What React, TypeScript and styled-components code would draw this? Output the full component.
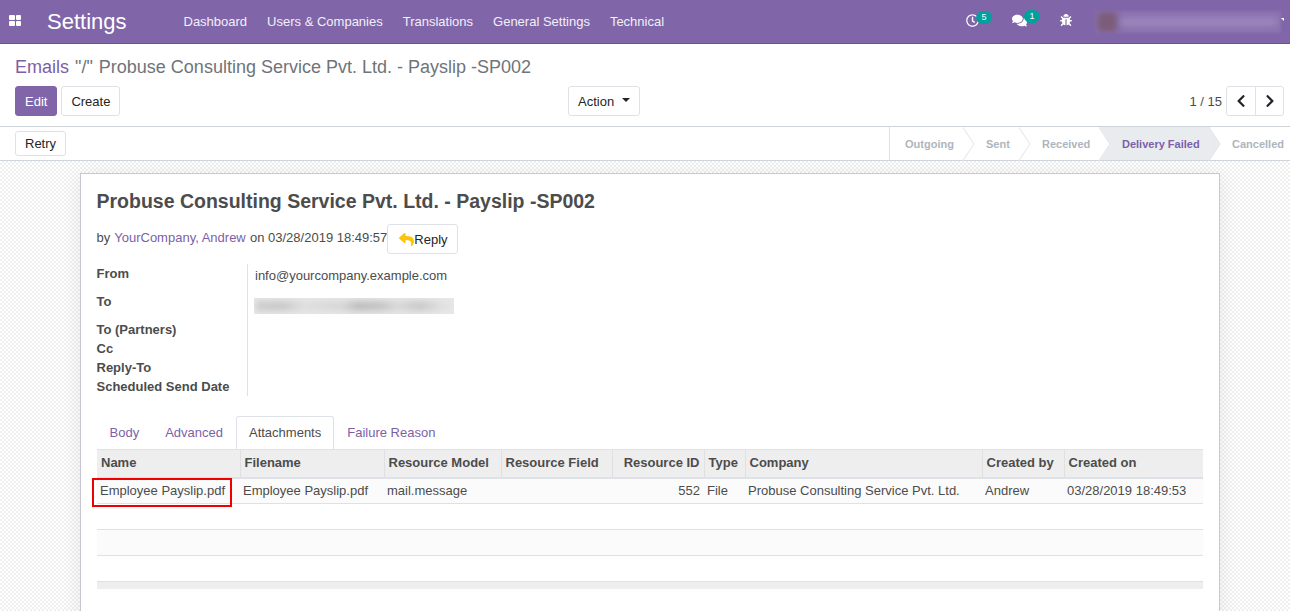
import styled, { createGlobalStyle } from 'styled-components'
import { FaBug, FaChevronLeft, FaChevronRight, FaComments, FaRegClock, FaReply } from 'react-icons/fa'

const GlobalStyle = createGlobalStyle`
  html, body {
    margin: 0;
    padding: 0;
    height: 100%;
    overflow: hidden;
  }
  body {
    font-family: "Liberation Sans", Arial, sans-serif;
    font-size: 13px;
    line-height: 19px;
    color: #4c4c4c;
    background: #fff;
  }
  * {
    box-sizing: border-box;
  }
`

const purple = '#8066a9'
const linkPurple = '#7c5fa8'
const line = '#dee2e6'

const Page = styled.div`
  height: 611px;
  display: flex;
  flex-direction: column;
  overflow: hidden;
`

const NavBar = styled.header`
  flex: none;
  height: 44px;
  display: flex;
  align-items: center;
  background: ${purple};
  border-bottom: 1px solid #6b5590;
  color: #fff;
`

const AppsButton = styled.div`
  width: 47px;
  padding-left: 9px;
  display: flex;
`

const AppsGrid = styled.div`
  width: 12px;
  margin-bottom: 3px;
  display: grid;
  grid-template-columns: 6px 5px;
  grid-auto-rows: 5px;
  gap: 1px;
  span {
    background: #fff;
    border-radius: 1px;
  }
`

const Brand = styled.div`
  font-size: 22px;
  line-height: 30px;
  margin-right: 57px;
`

const MainMenu = styled.nav`
  display: flex;
  gap: 20px;
  span {
    color: #f2eff7;
  }
`

const Systray = styled.div`
  margin-left: auto;
  display: flex;
  align-items: center;
  height: 100%;
`

const TrayItem = styled.div<{ $w: number }>`
  position: relative;
  width: ${(p) => p.$w}px;
  margin-bottom: 3px;
  display: flex;
  align-items: center;
  font-size: 13px;
`

const Badge = styled.span<{ $left: number }>`
  position: absolute;
  left: ${(p) => p.$left}px;
  top: -3px;
  width: 16px;
  height: 13px;
  border-radius: 6.5px;
  background: #00a09d;
  color: #fff;
  font-size: 9px;
  line-height: 13px;
  text-align: center;
`

const UserBlur = styled.div`
  position: relative;
  width: 186px;
  height: 22px;
  margin-left: 7px;
  margin-right: 9px;
  overflow: hidden;
  background: #8a72b0;
  filter: blur(1px);
  i {
    position: absolute;
    left: 2px;
    top: 1px;
    width: 20px;
    height: 20px;
    background: #7d5c78;
    filter: blur(3px);
  }
  b {
    position: absolute;
    left: 26px;
    right: 4px;
    top: 7px;
    height: 8px;
    background: #9c89bd;
    filter: blur(3px);
  }
`

const Caret = styled.span`
  position: absolute;
  right: 6px;
  top: 18px;
  border-top: 3px solid #fff;
  border-left: 3px solid transparent;
`

const ControlPanel = styled.section`
  flex: none;
  height: 83px;
  padding: 12px 6px 0 15px;
  border-bottom: 1px solid #ced4da;
`

const Breadcrumb = styled.div`
  font-size: 18px;
  line-height: 23px;
  color: #6f7479;
  a {
    color: ${linkPurple};
    margin-right: 1px;
  }
  span {
    margin-right: 1px;
  }
`

const ControlRow = styled.div`
  margin-top: 7px;
  display: grid;
  grid-template-columns: 553px auto 1fr;
  align-items: center;
`

const ButtonRow = styled.div`
  display: flex;
  gap: 4px;
`

const Button = styled.button<{ $primary?: boolean; $h?: number }>`
  height: ${(p) => p.$h ?? 30}px;
  padding: 0 9px;
  font: inherit;
  color: ${(p) => (p.$primary ? '#fff' : '#212529')};
  background: ${(p) => (p.$primary ? purple : '#fff')};
  border: 1px solid ${(p) => (p.$primary ? purple : line)};
  border-radius: 3px;
  display: inline-flex;
  align-items: center;
`

const ActionCaret = styled.span`
  margin-left: 8px;
  margin-bottom: 3px;
  border-top: 4px solid #212529;
  border-left: 4px solid transparent;
  border-right: 4px solid transparent;
`

const PagerArea = styled.div`
  display: flex;
  justify-content: flex-end;
  align-items: center;
  gap: 4px;
`

const PagerGroup = styled.div`
  display: flex;
  height: 30px;
  border: 1px solid ${line};
  border-radius: 3px;
`

const PagerButton = styled.div`
  width: 28px;
  display: flex;
  align-items: center;
  justify-content: center;
  font-size: 14px;
  color: #212529;
  & + & {
    border-left: 1px solid ${line};
  }
`

const StatusBar = styled.section`
  flex: none;
  height: 34px;
  display: flex;
  align-items: center;
  justify-content: space-between;
  padding-left: 15px;
  border-bottom: 1px solid #ced4da;
`

const StatusSteps = styled.div`
  height: 100%;
  display: flex;
  border-left: 1px solid ${line};
`

const Step = styled.div<{ $active?: boolean; $z: number; $w: number; $last?: boolean }>`
  position: relative;
  z-index: ${(p) => p.$z};
  width: ${(p) => p.$w}px;
  display: flex;
  align-items: center;
  padding-top: 1px;
  padding-left: ${(p) => (p.$z === 5 ? 15 : 22)}px;
  font-size: 11px;
  font-weight: 700;
  color: ${(p) => (p.$active ? linkPurple : '#adb5bd')};
  background: ${(p) => (p.$active ? '#e9ecef' : '#fff')};
  span {
    position: relative;
    z-index: 1;
  }
  &::after {
    content: ${(p) => (p.$last ? 'none' : '""')};
    position: absolute;
    right: -11.5px;
    top: 4.7px;
    width: 23.3px;
    height: 23.3px;
    background: ${(p) => (p.$active ? '#e9ecef' : '#fff')};
    border-top: 1px solid ${line};
    border-right: 1px solid ${line};
    transform: scaleX(0.66) rotate(45deg);
  }
`

const SheetBackground = styled.main`
  flex: 1;
  min-height: 0;
  padding: 12px 70px 0 80px;
  overflow: hidden;
  background-color: #fff;
  background-image: repeating-conic-gradient(#efefef 0 25%, #fff 0 50%);
  background-size: 4px 4px;
`

const Sheet = styled.article`
  height: 700px;
  padding: 15px 16px 0 15.5px;
  background: #fff;
  border: 1px solid #c9c6d6;
  box-shadow: 0 3px 20px rgba(0, 0, 0, 0.08);
`

const Title = styled.h1`
  margin: 0;
  font-size: 19.5px;
  line-height: 24px;
  font-weight: 700;
  color: #4c4c4c;
`

const ByLine = styled.div`
  margin-top: 11px;
  display: flex;
  align-items: flex-start;
  a {
    color: ${linkPurple};
    margin-left: 0.4px;
    margin-right: 0.6px;
  }
  p {
    margin: 4px 0 0;
  }
`

const ReplyButton = styled(Button)`
  padding: 0 9px 0 11px;
  svg {
    color: #fcc40d;
    font-size: 15px;
  }
`

const InfoGrid = styled.dl`
  margin: 10px 0 0;
  display: grid;
  grid-template-columns: 150.5px 1fr;
  grid-template-rows: 28px 28px 19px 19px 19px 19px;
  dt {
    font-weight: 700;
  }
  dd {
    margin: 0;
    padding-left: 7px;
    border-left: 1px solid ${line};
  }
`

const ValueText = styled.span`
  display: block;
  padding-top: 2px;
`

const BlurValue = styled.div`
  width: 200px;
  height: 16px;
  margin-top: 6px;
  margin-left: -1px;
  background: #e8e8e8;
  overflow: hidden;
  i {
    display: block;
    margin: 3px 2px;
    height: 10px;
    background: linear-gradient(
      90deg,
      #cccccc 0,
      #c8c8c8 14%,
      #dedede 24%,
      #d6d6d6 44%,
      #bcbcbc 52%,
      #c4c4c4 64%,
      #d8d8d8 72%,
      #c8c8c8 84%,
      #e2e2e2 96%
    );
    filter: blur(3px);
  }
`

const Tabs = styled.div`
  margin-top: 20px;
  height: 33px;
  display: flex;
`

const Tab = styled.div<{ $active?: boolean }>`
  padding: 0 12px 1px;
  display: flex;
  align-items: center;
  color: ${(p) => (p.$active ? '#4c4c4c' : linkPurple)};
  background: #fff;
  border: 1px solid ${(p) => (p.$active ? line : 'transparent')};
  border-bottom: 0;
  border-radius: 3px 3px 0 0;
`

const ListTable = styled.table`
  width: 1106px;
  margin-left: 0.5px;
  table-layout: fixed;
  border-collapse: collapse;
  border-top: 1px solid ${line};
`

const Th = styled.th<{ $right?: boolean }>`
  height: 28px;
  padding: 0 4px 1px 4px;
  text-align: ${(p) => (p.$right ? 'right' : 'left')};
  font-weight: 700;
  white-space: nowrap;
  background: #eeeeee;
  border-left: 1px solid #e0e0e0;
  border-bottom: 2px solid ${line};
  &:first-child {
    border-left: 0;
  }
`

const Row = styled.tr<{ $shade?: boolean }>`
  height: 26px;
  background: ${(p) => (p.$shade ? '#fbfbfb' : '#fff')};
  border-bottom: 1px solid ${line};
`

const Td = styled.td<{ $right?: boolean }>`
  position: relative;
  padding: 0 ${(p) => (p.$right ? 4 : 3)}px 0 3px;
  text-align: ${(p) => (p.$right ? 'right' : 'left')};
  white-space: nowrap;
`

const Highlight = styled.span`
  position: absolute;
  left: -5px;
  top: -1px;
  width: 140px;
  height: 29px;
  border: 2px solid #f00000;
`

const TableFooter = styled.div`
  width: 1106px;
  height: 7px;
  margin-left: 0.5px;
  background: #eeeeee;
`

const columns = [
  { label: 'Name', width: 143 },
  { label: 'Filename', width: 144 },
  { label: 'Resource Model', width: 117 },
  { label: 'Resource Field', width: 111 },
  { label: 'Resource ID', width: 92, right: true },
  { label: 'Type', width: 41 },
  { label: 'Company', width: 237 },
  { label: 'Created by', width: 82 },
  { label: 'Created on', width: 139 },
]

const cells = [
  'Employee Payslip.pdf',
  'Employee Payslip.pdf',
  'mail.message',
  '',
  '552',
  'File',
  'Probuse Consulting Service Pvt. Ltd.',
  'Andrew',
  '03/28/2019 18:49:53',
]

const steps = [
  { label: 'Outgoing', width: 74 },
  { label: 'Sent', width: 56 },
  { label: 'Received', width: 80 },
  { label: 'Delivery Failed', width: 110, active: true },
  { label: 'Cancelled', width: 80, last: true },
]

export default function App() {
  return (
    <Page>
      <GlobalStyle />
      <NavBar>
        <AppsButton>
          <AppsGrid>
            <span />
            <span />
            <span />
            <span />
          </AppsGrid>
        </AppsButton>
        <Brand>Settings</Brand>
        <MainMenu>
          <span>Dashboard</span>
          <span>Users &amp; Companies</span>
          <span>Translations</span>
          <span>General Settings</span>
          <span>Technical</span>
        </MainMenu>
        <Systray>
          <TrayItem $w={46}>
            <FaRegClock />
            <Badge $left={10}>5</Badge>
          </TrayItem>
          <TrayItem $w={48}>
            <FaComments size={15} />
            <Badge $left={12}>1</Badge>
          </TrayItem>
          <TrayItem $w={28}>
            <FaBug size={12} />
          </TrayItem>
          <UserBlur>
            <i />
            <b />
          </UserBlur>
          <Caret />
        </Systray>
      </NavBar>

      <ControlPanel>
        <Breadcrumb>
          <a>Emails</a> <span>"/"</span> Probuse Consulting Service Pvt. Ltd. - Payslip -SP002
        </Breadcrumb>
        <ControlRow>
          <ButtonRow>
            <Button $primary>Edit</Button>
            <Button>Create</Button>
          </ButtonRow>
          <Button>
            Action
            <ActionCaret />
          </Button>
          <PagerArea>
            1 / 15
            <PagerGroup>
              <PagerButton>
                <FaChevronLeft />
              </PagerButton>
              <PagerButton>
                <FaChevronRight />
              </PagerButton>
            </PagerGroup>
          </PagerArea>
        </ControlRow>
      </ControlPanel>

      <StatusBar>
        <Button $h={25}>Retry</Button>
        <StatusSteps>
          {steps.map((s, i) => (
            <Step key={s.label} $z={5 - i} $w={s.width} $active={s.active} $last={s.last}>
              <span>{s.label}</span>
            </Step>
          ))}
        </StatusSteps>
      </StatusBar>

      <SheetBackground>
        <Sheet>
          <Title>Probuse Consulting Service Pvt. Ltd. - Payslip -SP002</Title>
          <ByLine>
            <p>
              by <a>YourCompany, Andrew</a> on 03/28/2019 18:49:57
            </p>
            <ReplyButton>
              <FaReply />
              Reply
            </ReplyButton>
          </ByLine>
          <InfoGrid>
            <dt>From</dt>
            <dd>
              <ValueText>info@yourcompany.example.com</ValueText>
            </dd>
            <dt>To</dt>
            <dd>
              <BlurValue>
                <i />
              </BlurValue>
            </dd>
            <dt>To (Partners)</dt>
            <dd />
            <dt>Cc</dt>
            <dd />
            <dt>Reply-To</dt>
            <dd />
            <dt>Scheduled Send Date</dt>
            <dd />
          </InfoGrid>
          <Tabs>
            <Tab>Body</Tab>
            <Tab>Advanced</Tab>
            <Tab $active>Attachments</Tab>
            <Tab>Failure Reason</Tab>
          </Tabs>
          <ListTable>
            <colgroup>
              {columns.map((c) => (
                <col key={c.label} style={{ width: c.width }} />
              ))}
            </colgroup>
            <thead>
              <tr>
                {columns.map((c) => (
                  <Th key={c.label} $right={c.right}>
                    {c.label}
                  </Th>
                ))}
              </tr>
            </thead>
            <tbody>
              <Row $shade>
                {cells.map((text, i) => (
                  <Td key={i} $right={i === 4}>
                    {text}
                    {i === 0 && <Highlight />}
                  </Td>
                ))}
              </Row>
              <Row>
                <td colSpan={9} />
              </Row>
              <Row $shade>
                <td colSpan={9} />
              </Row>
              <Row>
                <td colSpan={9} />
              </Row>
            </tbody>
          </ListTable>
          <TableFooter />
        </Sheet>
      </SheetBackground>
    </Page>
  )
}
